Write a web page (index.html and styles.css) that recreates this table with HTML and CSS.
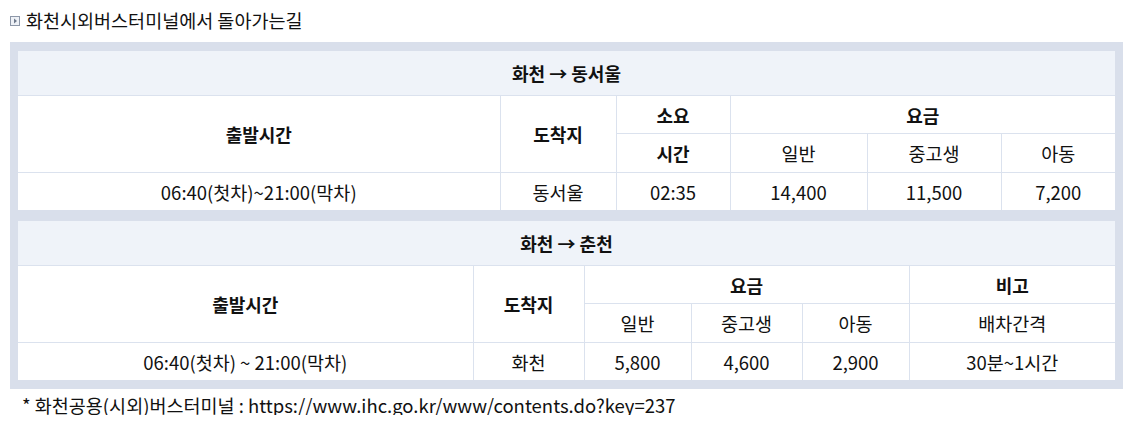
FILE: index.html
```html
<!DOCTYPE html>
<html>
<head lang="ko">
    <meta charset="UTF-8">
    <title>화천시외버스터미널</title>
    <link rel="stylesheet" href="styles.css">
</head>
<body>
<div id="wrap">
    <h3 class="tit">
        <svg class="ico" width="10" height="10" viewBox="0 0 10 10">
            <rect x="0.5" y="0.5" width="9" height="9" fill="#eef1f6" stroke="#8d97a8"/>
            <path d="M4 2.5 L7 5 L4 7.5 Z" fill="#6f7a8c"/>
        </svg>
        화천시외버스터미널에서 돌아가는길
    </h3>
    <div class="box">
        <table class="tbl t1">
            <colgroup>
                <col style="width:482px"><col style="width:116px"><col style="width:114px">
                <col style="width:137px"><col style="width:134px"><col>
            </colgroup>
            <tr class="head"><th colspan="6">화천 → 동서울</th></tr>
            <tr>
                <th rowspan="2">출발시간</th>
                <th rowspan="2">도착지</th>
                <th>소요</th>
                <th colspan="3">요금</th>
            </tr>
            <tr class="mid">
                <th>시간</th>
                <td>일반</td>
                <td>중고생</td>
                <td>아동</td>
            </tr>
            <tr>
                <td>06:40(첫차)~21:00(막차)</td>
                <td>동서울</td>
                <td>02:35</td>
                <td>14,400</td>
                <td>11,500</td>
                <td>7,200</td>
            </tr>
        </table>
        <table class="tbl t2">
            <colgroup>
                <col style="width:455px"><col style="width:111px"><col style="width:107px">
                <col style="width:111px"><col style="width:107px"><col>
            </colgroup>
            <tr class="head"><th colspan="6">화천 → 춘천</th></tr>
            <tr>
                <th rowspan="2">출발시간</th>
                <th rowspan="2">도착지</th>
                <th colspan="3">요금</th>
                <th>비고</th>
            </tr>
            <tr class="mid">
                <td>일반</td>
                <td>중고생</td>
                <td>아동</td>
                <td>배차간격</td>
            </tr>
            <tr>
                <td>06:40(첫차) ~ 21:00(막차)</td>
                <td>화천</td>
                <td>5,800</td>
                <td>4,600</td>
                <td>2,900</td>
                <td>30분~1시간</td>
            </tr>
        </table>
    </div>
    <p class="note">* 화천공용(시외)버스터미널 : https://www.ihc.go.kr/www/contents.do?key=237</p>
</div>
</body>
</html>
```

FILE: styles.css
```css
*{
    margin: 0;
    padding: 0;
}
body{
    background: #fff;
    color: #111;
    font-family: "Noto Sans CJK KR", "Noto Sans", sans-serif;
}
#wrap{
    width: 1113px;
    margin-left: 10px;
}
.tit{
    display: flex;
    align-items: center;
    gap: 6px;
    height: 42px;
    font-size: 18.5px;
    font-weight: normal;
    line-height: 42px;
    position: relative;
    top: -1px;
}
.tit .ico{
    display: block;
    margin-top: 1px;
}
.box{
    background: #d9dfeb;
    padding: 9px 8px 9px;
    display: flex;
    flex-direction: column;
    gap: 11px;
}
.tbl{
    width: 1097px;
    border-collapse: collapse;
    border-style: hidden;
    table-layout: fixed;
    background: #fff;
}
.tbl th,.tbl td{
    border: 1px solid #dbe2ee;
    height: 37px;
    padding: 0;
    text-align: center;
    vertical-align: middle;
    font-size: 18.5px;
    line-height: 20px;
    white-space: nowrap;
}
.tbl th{
    font-weight: bold;
    font-size: 18px;
}
.tbl tr.mid th,.tbl tr.mid td{
    height: 38px;
}
.tbl tr.head th{
    height: 44px;
    background: #eff3f9;
}
.note{
    font-size: 18.5px;
    line-height: 20px;
    padding: 6px 0 0 12px;
}
```
